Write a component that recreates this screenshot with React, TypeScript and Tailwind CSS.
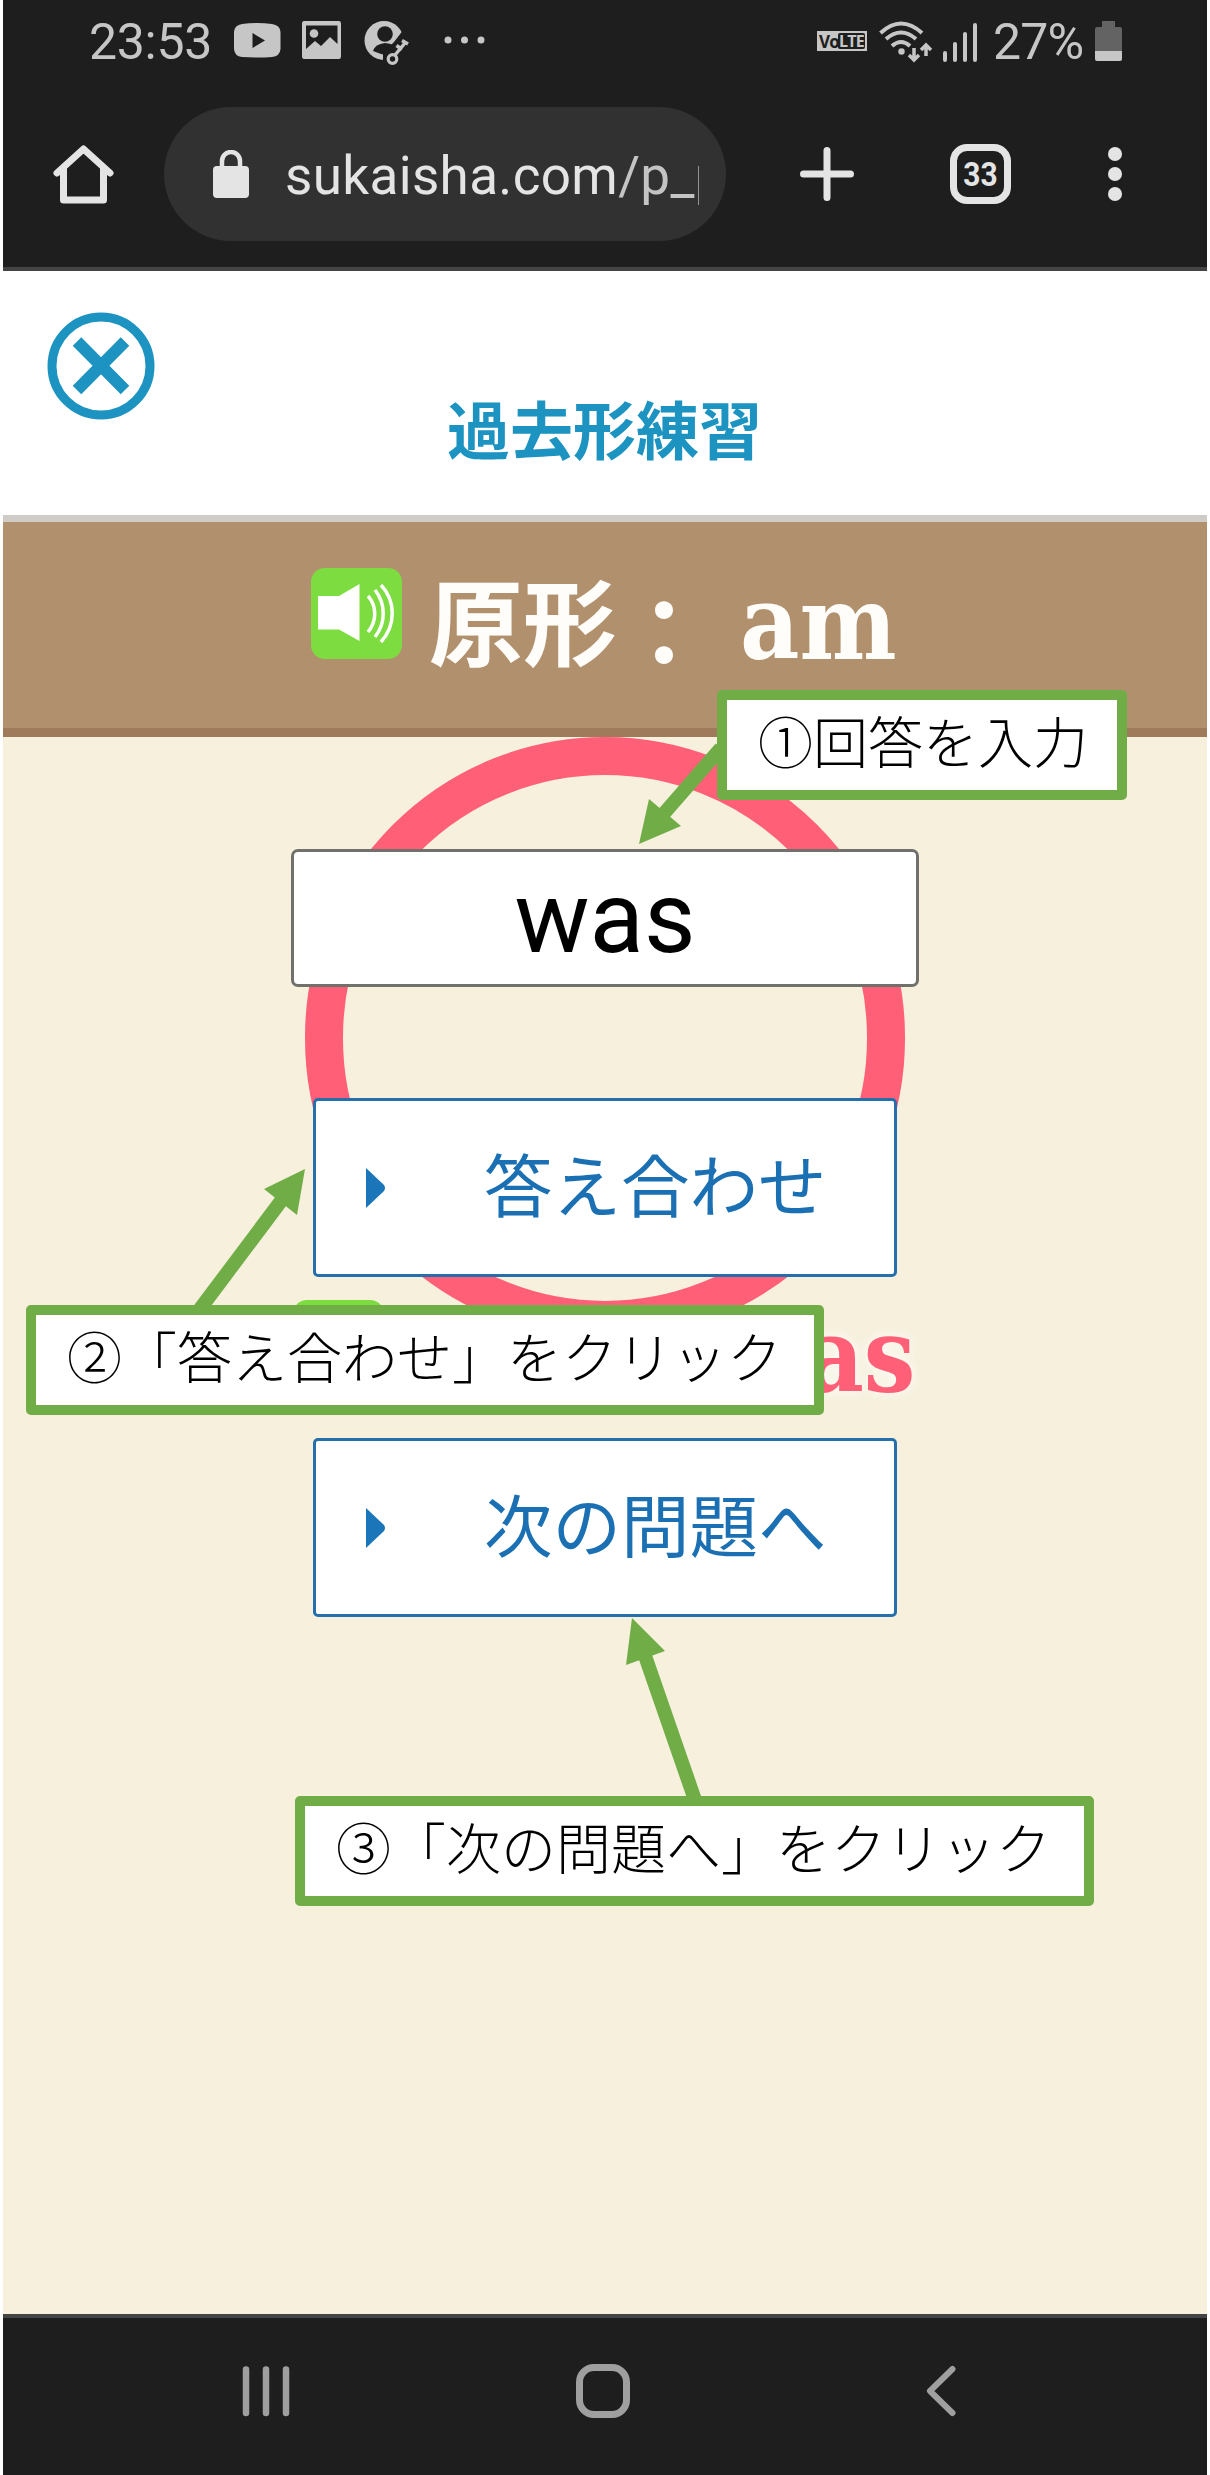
import React from "react";

const CJK = "font-['Noto_Sans_CJK_JP',sans-serif]";

function SpeakerIcon() {
  return (
    <svg viewBox="0 0 91 91" className="h-[91px] w-[91px] shrink-0">
      <rect width="91" height="91" rx="14" fill="#7ddc40" />
      <path d="M7 28H28L48.500 16V73L28 61.500H7Z" fill="#fff" />
      <g fill="none" stroke="#fff" strokeWidth="3.500">
        <path d="M57 28C66 38 66 53 57 64" />
        <path d="M64 22C75 36 75 55 64 69" />
        <path d="M70 17C85 33 85 57 70 74" />
      </g>
    </svg>
  );
}

function StatusBar() {
  return (
    <div className="flex h-[82px] items-center pl-[86px] pr-[85px] font-[Roboto,sans-serif] text-[#c6c6c6]">
      <span className="mt-[2px] w-[145px] text-[50px] leading-none tracking-[-0.3px]">23:53</span>
      <svg viewBox="0 0 260 60" className="h-[60px] w-[260px]">
        <path fillRule="evenodd" fill="#c6c6c6" d="M8 13Q23 11 38 13Q46 14 46.500 21V38Q46 45 38 46Q23 47 8 46Q0.500 45 0 38V21Q.500 14 8 13ZM18.500 22V37L31 29.500Z" />
        <path fillRule="evenodd" fill="#c6c6c6" d="M70 10H105Q107 10 107 13V45Q107 48 105 48H70Q68 48 68 45V13Q68 10 70 10ZM72 14.500V38L81 30 87 35 96 26 103.500 33V14.500Z" />
        <circle cx="80" cy="22.500" r="4.300" fill="#c6c6c6" />
        <circle cx="150" cy="29.500" r="19.500" fill="#c6c6c6" />
        <path d="M170 18L160 31 149 42V52H176V18Z" fill="#1e1e1e" />
        <circle cx="151" cy="23" r="7.800" fill="#1e1e1e" />
        <path d="M139 40Q141 33 151 32Q161 33 165 38L156 45Q148 44 139 40Z" fill="#1e1e1e" />
        <circle cx="158.500" cy="48" r="4.300" fill="none" stroke="#c6c6c6" strokeWidth="3.200" />
        <path d="M161 44L171 32M162.500 34.500L168 38.500M168 29.500L174 33" stroke="#c6c6c6" strokeWidth="3.500" />
        <circle cx="214" cy="29" r="3.500" fill="#c6c6c6" />
        <circle cx="230.500" cy="29" r="3.500" fill="#c6c6c6" />
        <circle cx="247" cy="29" r="3.500" fill="#c6c6c6" />
      </svg>
      <div className="ml-auto flex items-center">
        <div className="mr-[12px] flex h-[20px] w-[50px] items-center bg-[#c6c6c6] pr-[2px] font-['Open_Sans',sans-serif] text-[17px] font-bold leading-none text-[#1e1e1e]">
          <span className="w-[21px] pl-[2px] tracking-[-0.8px]">Vo</span>
          <span className="flex h-[16px] flex-1 items-center justify-center rounded-[2px] bg-[#1e1e1e] text-[16px] tracking-[-0.8px] text-[#c6c6c6]">LTE</span>
        </div>
        <svg viewBox="0 0 100 44" className="h-[44px] w-[100px]">
          <g fill="none" stroke="#c6c6c6" strokeWidth="4">
            <path d="M1.500 14Q22 -5 43 14M7 20Q22 7 37 20M13 27Q22 19 31 27" />
            <path d="M35 29V40M30 36L35 41L40 36M47 37V26M42 31L47 26L52 31" strokeWidth="3.500" />
            <path d="M66 41V34M76 41V25M86 41V15M96 41V6" strokeLinecap="round" />
          </g>
          <circle cx="22.500" cy="32.500" r="3.200" fill="#c6c6c6" />
        </svg>
        <span className="ml-[14px] mt-[2px] w-[102px] text-[50px] leading-none tracking-[-0.8px]">27%</span>
        <svg viewBox="0 0 27 40" className="h-[40px] w-[27px]">
          <path d="M7 0H20V6H25Q27 6 27 8V30H0V8Q0 6 2 6H7Z" fill="#636363" />
          <path d="M0 30H27V38Q27 40 25 40H2Q0 40 0 38Z" fill="#c6c6c6" />
        </svg>
      </div>
    </div>
  );
}

function BrowserBar() {
  return (
    <div className="flex h-[185px] items-start pl-[50px] pt-[25px]">
      <svg viewBox="0 0 61 134" className="h-[134px] w-[61px]" fill="none" stroke="#e4e4e4" strokeWidth="7" strokeLinecap="round" strokeLinejoin="round">
        <path d="M4 66L30.500 42L57 66M10.500 62V93H50.500V62" />
      </svg>
      <div className="ml-[50px] flex h-[134px] w-[562px] items-center rounded-[67px] bg-[#313131] pl-[49px]">
        <svg viewBox="0 0 36 48" className="h-[48px] w-[36px]">
          <rect y="16" width="36" height="32" rx="4" fill="#e4e4e4" />
          <path d="M9 18V11A9 9 0 0 1 27 11V18" fill="none" stroke="#e4e4e4" strokeWidth="4.500" />
        </svg>
        <div className="ml-[36px] mt-[3px] w-[414px] overflow-hidden whitespace-nowrap font-[Roboto,sans-serif] text-[53px] leading-[70px] tracking-[0.35px] text-[#e4e4e4]">
          sukaisha.com<span className="text-[#c4c4c4]">/p_p</span>
        </div>
      </div>
      <svg viewBox="0 0 54 54" className="ml-[74px] mt-[40px] h-[54px] w-[54px]" stroke="#e4e4e4" strokeWidth="7" strokeLinecap="round">
        <path d="M27 3.500V50.500M3.500 27H50.500" />
      </svg>
      <div className="ml-[96px] mt-[37px] flex h-[60px] w-[61px] items-center justify-center rounded-[17px] border-[7px] border-[#e4e4e4] font-[Roboto,sans-serif] text-[34px] font-bold leading-none text-[#e4e4e4]">
        <span className="scale-x-[0.88]">33</span>
      </div>
      <div className="ml-[97px] mt-[40px] flex flex-col gap-[6px]">
        <i className="h-[14px] w-[14px] rounded-full bg-[#e4e4e4]" />
        <i className="h-[14px] w-[14px] rounded-full bg-[#e4e4e4]" />
        <i className="h-[14px] w-[14px] rounded-full bg-[#e4e4e4]" />
      </div>
    </div>
  );
}

function ActionButton({ label }: { label: string }) {
  return (
    <button className={`relative flex h-[179px] w-[584px] items-center rounded-[5px] border-[3px] border-[#2570ac] bg-white pl-[50px] text-[68.500px] leading-none text-[#1b70b3] ${CJK}`}>
      <svg viewBox="0 0 19 40" className="h-[40px] w-[19px]">
        <path d="M0 0L18 17Q20 20 18 23L0 40Z" fill="#1b76b9" />
      </svg>
      <span className="mb-[8px] ml-[99px] whitespace-nowrap">{label}</span>
    </button>
  );
}

function Callout({ text, place }: { text: string; place: string }) {
  return (
    <div className={`absolute flex h-[110px] items-center whitespace-nowrap rounded-[5px] border-[10px] border-[#70ad47] bg-white pb-[12px] pl-[31px] text-[55px] font-light leading-none text-black ${CJK} ${place}`}>
      {text}
    </div>
  );
}

export default function App() {
  return (
    <div className="h-[2475px] w-[1210px] bg-white px-[3px]">
      <div className="relative flex h-full flex-col">
        <header className="h-[271px] border-b-[4px] border-[#444444] bg-[#1e1e1e]">
          <StatusBar />
          <BrowserBar />
        </header>

        <div className="flex h-[251px] flex-col border-b-[7px] border-[#cfcbc7] bg-white pl-[44px] pt-[41px]">
          <svg viewBox="0 0 108 108" className="h-[108px] w-[108px] shrink-0" fill="none" stroke="#1c93c0">
            <circle cx="54" cy="54" r="49" strokeWidth="9" />
            <path d="M30 29.500L78 78M78 29.500L30 78" strokeWidth="12" />
          </svg>
          <h1 className={`-mt-[25px] ml-[400px] text-[63px] font-bold leading-[63px] text-[#1c93c0] ${CJK}`}>過去形練習</h1>
        </div>

        <div className="flex h-[215px] items-start border-b-[9px] border-[#9f7a5b] bg-[#b0906d] pl-[308px] pt-[46px]">
          <SpeakerIcon />
          <div className={`ml-[27px] mt-[3px] text-[94px] font-bold leading-[94px] text-[#fffdf9] ${CJK}`}>原形<span className="relative top-[9px]">：</span></div>
          <div className="ml-[29px] mt-[-7px] font-['DejaVu_Serif_Condensed','DejaVu_Serif',serif] text-[102px] font-bold leading-[124px] text-[#fffdf9] [font-stretch:condensed]">am</div>
        </div>

        <main className="relative flex flex-1 flex-col items-center bg-[#f6f0dc]">
          <div className="absolute left-[302px] top-0 h-[602px] w-[600px] rounded-full border-[38px] border-[#ff6077]" />
          <div className="relative mt-[112px] flex h-[138px] w-[628px] items-center justify-center rounded-[7px] border-[3px] border-[#70716c] bg-white font-[Roboto,sans-serif] text-[100px] leading-none text-black">was</div>
          <div className="relative mt-[111px]"><ActionButton label="答え合わせ" /></div>
          <div className="relative mt-[23px] flex h-[114px] w-[621px] items-start justify-between">
            <div className="-ml-[2px]"><SpeakerIcon /></div>
            <div className="mt-[-6px] font-['DejaVu_Serif_Condensed','DejaVu_Serif',serif] text-[102px] font-bold leading-[124px] text-[#ff6077] [font-stretch:condensed] [text-shadow:0_0_14px_#fff]">as</div>
          </div>
          <div className="relative mt-[24px]"><ActionButton label="次の問題へ" /></div>
        </main>

        <nav className="flex h-[161px] items-start border-t-[4px] border-[#444444] bg-[#1e1e1e] pt-[45px]">
          <svg viewBox="0 0 54 54" className="ml-[236px] h-[54px] w-[54px]" stroke="#9f9f9f" strokeWidth="6.500" strokeLinecap="round">
            <path d="M7 6.500V50M27 6.500V50M47 6.500V50" />
          </svg>
          <div className="ml-[283px] mt-[1px] h-[54px] w-[54px] rounded-[18px] border-[7px] border-[#9f9f9f]" />
          <svg viewBox="0 0 30 54" className="ml-[296px] h-[54px] w-[30px]" fill="none" stroke="#9f9f9f" strokeWidth="6" strokeLinecap="round" strokeLinejoin="round">
            <path d="M26.500 6L4 28L26.500 50" />
          </svg>
        </nav>

        <svg viewBox="3 0 1204 2475" className="pointer-events-none absolute inset-0 h-full w-full" fill="#70ad47" stroke="#70ad47">
          <path d="M721 748L660 818M200 1309L284 1197M695 1800L643 1650" strokeWidth="14" fill="none" />
          <path d="M639 844L649 799L681 826ZM305 1169L264 1189L297 1215ZM632 1618L626 1665L665 1651Z" stroke="none" />
        </svg>
        <Callout text="①回答を入力" place="left-[714px] top-[690px] w-[410px]" />
        <Callout text="②「答え合わせ」をクリック" place="left-[23px] top-[1305px] w-[798px]" />
        <Callout text="③「次の問題へ」をクリック" place="left-[292px] top-[1796px] w-[799px]" />
      </div>
    </div>
  );
}
